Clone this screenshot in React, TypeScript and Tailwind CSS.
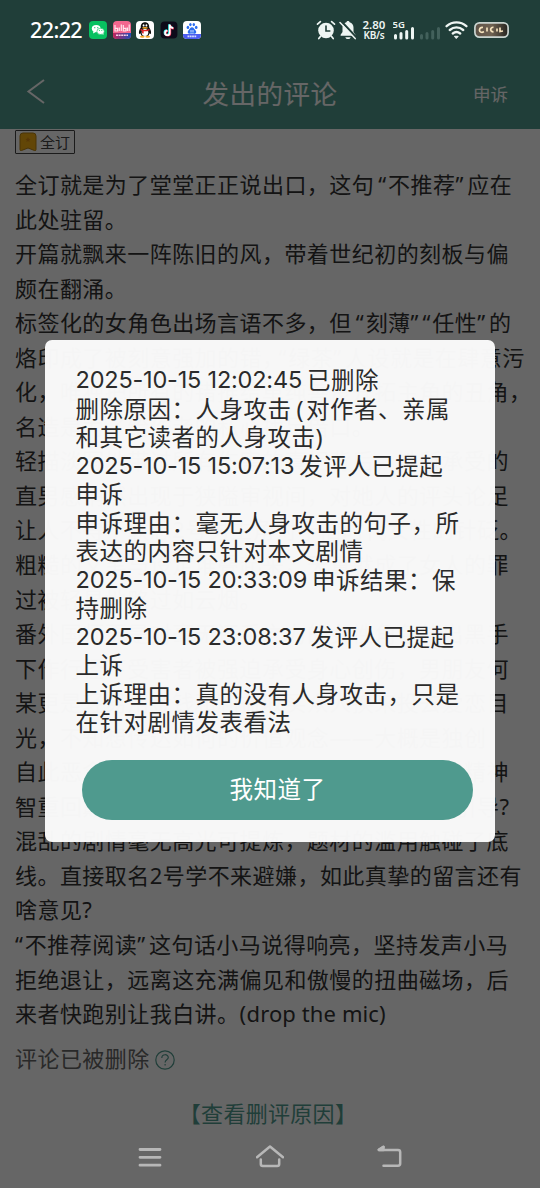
import React from "react";

const cjk = "font-['Noto_Sans','Noto_Sans_CJK_SC',sans-serif]";

const commentLines: string[] = [
  "全订就是为了堂堂正正说出口，这句“不推荐”应在",
  "此处驻留。",
  "开篇就飘来一阵陈旧的风，带着世纪初的刻板与偏",
  "颇在翻涌。",
  "标签化的女角色出场言语不多，但“刻薄”“任性”的",
  "烙印成了被刻意强加的错，“绿茶”人设就是在肆意污",
  "化，唯独把所有的错推给单纯善良开拓主角的丑角，",
  "名造是为了给作者的私心找足借口。",
  "轻描淡写地带过所有伤害的真相背后，她所承受的",
  "直男感悄然出现于狭隘审视间，对她人的评头论足",
  "让人不得不联想2号男主角对于旧时代女性的针砭。",
  "粗糙的文笔与设定堆叠起来，天真就成了女人的罪",
  "过被轻易地略过如云烟。",
  "番外国师更是对毫无还手之力的女性角色伸出黑手",
  "下作行径下受害者被强迫承受身心创伤，男朋友何",
  "某更是轻易用金钱和利益收买众人换来投去爱恋目",
  "光，不知想传达如何的价值观念——大概是独创",
  "自此恶念横生的角色竟能够得到所谓救赎宽恕精神",
  "智重回巅峰难道就是给读者们的所谓2号精神引导?",
  "混乱的剧情毫无高光可提炼，题材的滥用触碰了底",
  "线。直接取名2号学不来避嫌，如此真挚的留言还有",
  "啥意见?",
  "“不推荐阅读”这句话小马说得响亮，坚持发声小马",
  "拒绝退让，远离这充满偏见和傲慢的扭曲磁场，后",
  "来者快跑别让我白讲。(drop the mic)",
];

interface LogLine {
  time?: string;
  text: string;
}

const logLines: LogLine[] = [
  { time: "2025-10-15 12:02:45", text: "已删除" },
  { text: "删除原因：人身攻击(对作者、亲属" },
  { text: "和其它读者的人身攻击)" },
  { time: "2025-10-15 15:07:13", text: "发评人已提起" },
  { text: "申诉" },
  { text: "申诉理由：毫无人身攻击的句子，所" },
  { text: "表达的内容只针对本文剧情" },
  { time: "2025-10-15 20:33:09", text: "申诉结果：保" },
  { text: "持删除" },
  { time: "2025-10-15 23:08:37", text: "发评人已提起" },
  { text: "上诉" },
  { text: "上诉理由：真的没有人身攻击，只是" },
  { text: "在针对剧情发表看法" },
];

function Spaced({ text }: { text: string }) {
  return (
    <>
      {text.split(/([“”(]|[a-z ]{4,}\))/).map((part, i, parts) => {
        if (part === "“") {
          const before = parts[i - 1];
          if (before.endsWith("，")) return <span key={i} className="-ml-1.5 mr-[1.5px]">{part}</span>;
          return <span key={i} className={before ? "ml-1 mr-[1.5px]" : "mr-[1.5px]"}>{part}</span>;
        }
        if (part === "”") return <span key={i} className="mr-[3.5px]">{part}</span>;
        if (part === "(") return <span key={i} className={text.includes("drop") ? "" : "ml-[5px] mr-[2px]"}>{part}</span>;
        if (part.startsWith("drop")) return <span key={i} className="tracking-[0.1px]">{part}</span>;
        return part;
      })}
    </>
  );
}

function AppIcons() {
  return (
    <div className="ml-2 flex items-center gap-[5.5px]">
      {/* WeChat */}
      <svg width="18" height="18" viewBox="0 0 18 18">
        <rect width="18" height="18" rx="4" fill="#07c160" />
        <ellipse cx="7.2" cy="7.6" rx="4.4" ry="3.7" fill="#fff" />
        <path d="M4.5 10.3 4 12.4l2.4-1.2z" fill="#fff" />
        <ellipse cx="11.6" cy="10.4" rx="3.7" ry="3.1" fill="#fff" stroke="#07c160" strokeWidth=".6" />
        <path d="m13.2 12.8 1.3 1.3-.2-2z" fill="#fff" />
        <g fill="#07c160">
          <circle cx="5.8" cy="6.7" r=".6" />
          <circle cx="8.8" cy="6.7" r=".6" />
          <circle cx="10.4" cy="9.6" r=".5" />
          <circle cx="12.8" cy="9.6" r=".5" />
        </g>
      </svg>
      {/* bilibili */}
      <svg width="18" height="18" viewBox="0 0 18 18">
        <defs>
          <clipPath id="bili"><rect width="18" height="18" rx="4" /></clipPath>
          <linearGradient id="biliBar"><stop stopColor="#c2255c" /><stop offset="1" stopColor="#1d4fb8" /></linearGradient>
        </defs>
        <g clipPath="url(#bili)">
          <rect width="18" height="18" fill="#f2668f" />
          <rect y="12" width="18" height="6" fill="url(#biliBar)" />
          <path d="M2 4v6h2.6V7.4H2M6.3 6.5V10M8.3 3.5V10M10.3 4v6h2.6V7.4h-2.6M14.4 6.5V10M16.2 3.5V10" fill="none" stroke="#ffe3ec" strokeWidth="1.2" />
          <path d="M3 14.3h12" stroke="#f5d4e6" strokeWidth="1.6" strokeDasharray="2 .6" />
        </g>
      </svg>
      {/* QQ */}
      <svg width="18" height="18" viewBox="0 0 18 18">
        <rect width="18" height="18" rx="4" fill="#fff" />
        <path d="M9 1.3c-3 0-4.4 2.2-4.2 5.2C3.4 8.4 2.7 10.5 3 12.5c.3.9.9.3 1.4-.3.3 1.2.8 2 1.5 2.7h6.2c.7-.7 1.2-1.5 1.5-2.7.5.6 1.1 1.2 1.4.3.3-2-.4-4.1-1.800-6C13.400 3.500 12 1.300 9 1.300z" fill="#111" />
        <ellipse cx="9" cy="11.6" rx="3.3" ry="3.5" fill="#fff" />
        <ellipse cx="7.6" cy="4.4" rx=".9" ry="1.2" fill="#fff" />
        <ellipse cx="10.4" cy="4.4" rx=".9" ry="1.2" fill="#fff" />
        <ellipse cx="9" cy="6.8" rx="2.9" ry=".9" fill="#f9a825" />
        <path d="M4.7 7.8c2.800 1.600 5.800 1.600 8.600 0l.3 1.400c-1.800 1-3.900 1.300-5.900 1.100v2.200l-1.700-.2V10c-.6-.2-1.100-.4-1.600-.8z" fill="#e0272c" />
        <ellipse cx="6.3" cy="15.8" rx="2.4" ry="1" fill="#f9a825" />
        <ellipse cx="11.7" cy="15.8" rx="2.4" ry="1" fill="#f9a825" />
      </svg>
      {/* Douyin */}
      <svg width="18" height="18" viewBox="0 0 18 18">
        <rect x=".6" y=".6" width="16.8" height="16.8" rx="4" fill="#0d0b1a" />
        <g fill="none" strokeWidth="2">
          <path d="M9.2 3.2v8.3a2.3 2.3 0 1 1-2.3-2.3M9.2 3.5c.3 1.8 1.6 3 3.6 3.2" stroke="#25f4ee" />
          <path d="M10.2 4v8.3A2.3 2.3 0 1 1 7.9 10M10.2 4.3c.3 1.8 1.6 3 3.6 3.2" stroke="#fe2c55" />
          <path d="M9.7 3.6v8.3a2.3 2.3 0 1 1-2.3-2.3M9.7 3.9c.3 1.8 1.6 3 3.6 3.2" stroke="#fff" strokeWidth="1.7" />
        </g>
      </svg>
      {/* Baidu */}
      <svg width="18" height="18" viewBox="0 0 18 18">
        <defs><clipPath id="baidu"><rect width="18" height="18" rx="4" /></clipPath></defs>
        <g clipPath="url(#baidu)">
          <rect width="18" height="18" fill="#fff" />
          <g fill="#2a6cf0">
            <ellipse cx="4.9" cy="6.4" rx="1.3" ry="1.7" />
            <ellipse cx="7.4" cy="3.6" rx="1.2" ry="1.7" />
            <ellipse cx="10.8" cy="3.6" rx="1.2" ry="1.7" />
            <ellipse cx="13.2" cy="6.4" rx="1.3" ry="1.7" />
            <path d="M9 6.3c1.7 0 2.1 1.7 3.2 2.7 1.4 1.2 1.5 3.5-.5 3.8-1 .1-1.7-.2-2.7-.2s-1.7.3-2.7.2c-2-.3-1.9-2.6-.5-3.8C6.900 8 7.300 6.300 9 6.300z" />
          </g>
          <path d="M8 9v2.500M10 9v2.500" stroke="#fff" strokeWidth=".8" />
          <path d="M0 13h18v5H0z" fill="#4b5cf0" />
          <path d="M4.500 15.300h9" stroke="#d7dcff" strokeWidth="1.700" strokeDasharray="1.800 .5" />
        </g>
      </svg>
    </div>
  );
}

function SystemIcons() {
  return (
    <div className="flex items-center text-[#eef5f3]">
      {/* Alarm */}
      <svg width="20" height="20" viewBox="0 0 20 20" fill="none" stroke="currentColor" strokeLinecap="round">
        <circle cx="10" cy="10.5" r="7.8" fill="currentColor" stroke="none" />
        <path d="M1.5 4.2 4.4 1.6M18.5 4.2 15.6 1.6M4.4 16.5l-1.6 2M15.6 16.5l1.6 2" strokeWidth="1.7" />
        <path d="M10 6v5h3.8" stroke="#213e39" strokeWidth="1.6" />
      </svg>
      {/* Muted bell */}
      <svg className="ml-[3px]" width="18" height="20" viewBox="0 0 18 20">
        <path d="M9 1c1 0 1.500.6 1.600 1.300 2.500.7 3.900 2.700 3.900 5.200V12l1.900 2.700v1H1.600v-1L3.500 12V7.500c0-2.500 1.400-4.500 3.900-5.200C7.500 1.600 8 1 9 1zM6.300 17.200h5.400c-.4 1.200-1.300 1.900-2.700 1.900s-2.300-.7-2.700-1.900z" fill="currentColor" />
        <path d="M2 1.100 17.600 17.700" stroke="#213e39" strokeWidth="2.200" />
        <path d="M1 2.600 16.200 18.600" stroke="currentColor" strokeWidth="1.500" strokeLinecap="round" />
      </svg>
      <div className="ml-[5px] flex w-6 flex-col items-center font-['Noto_Sans',sans-serif] font-semibold leading-[10px]">
        <span className="text-[11.5px]">2.80</span>
        <span className="text-[10px] tracking-[-0.2px]">KB/s</span>
      </div>
      <svg className="ml-[7px]" width="22" height="20" viewBox="0 0 22 20">
        <text x="-0.5" y="8" fontSize="9.5" fontWeight="600" fontFamily="Noto Sans, sans-serif" fill="currentColor">5G</text>
        <path d="M2.5 18v-2.5M8 18v-4.5M13.7 18v-6.5M19.5 18V8.5" stroke="currentColor" strokeWidth="3" strokeLinecap="round" />
      </svg>
      <svg className="ml-[4px] text-[#42605b]" width="22" height="20" viewBox="0 0 22 20">
        <path d="M2.5 18v-2.5M8 18v-4.5M13.7 18v-6.5M19.5 18V8.5" stroke="currentColor" strokeWidth="3" strokeLinecap="round" />
      </svg>
      {/* Wi-Fi */}
      <svg className="ml-[4px]" width="23" height="20" viewBox="0 0 23 20" fill="none" stroke="currentColor" strokeWidth="2.3" strokeLinecap="round">
        <path d="M1.6 6.2c5.8-5 14-5 19.8 0M4.8 10c4-3.4 9.4-3.4 13.4 0M7.8 13.500c2.300-1.900 5.100-1.900 7.400 0" />
        <path d="M9.8 16.3h3.4l-1.7 2z" fill="currentColor" strokeWidth="1" />
      </svg>
      {/* Battery */}
      <svg className="ml-[6px]" width="35" height="16" viewBox="0 0 35 16">
        <defs>
          <linearGradient id="battery"><stop stopColor="#5d5147" /><stop offset=".5" stopColor="#6f6252" /><stop offset="1" stopColor="#25241f" /></linearGradient>
        </defs>
        <rect x=".9" y=".9" width="33.2" height="14.2" rx="4.5" fill="url(#battery)" stroke="#c9d3cf" strokeWidth="1.7" />
        <path d="M9 5.5c-4-.5-5 4.700-1 4.800l2-.6M13 5.500v4M19.500 5.300c-3.500-.5-4 4.600 0 4.500M23 6.500v3M26 5.500v4l3-.5" fill="none" stroke="#f5e3bd" strokeWidth="1.700" />
      </svg>
    </div>
  );
}

function StatusBar() {
  return (
    <div className="relative z-20 flex h-[60px] items-center justify-between pl-[30px] pr-[31px]">
      <div className="flex items-center">
        <span className="w-[51px] whitespace-nowrap font-['Noto_Sans',sans-serif] text-[21.5px] font-medium leading-6 tracking-[-0.6px] text-white">22:22</span>
        <AppIcons />
      </div>
      <SystemIcons />
    </div>
  );
}

function NavBar() {
  return (
    <div className="relative z-20 mb-[3px] mt-auto flex h-16 items-center justify-center gap-[92px] text-[#b7b7b7]">
      <svg width="28" height="28" viewBox="0 0 28 28" stroke="currentColor" strokeWidth="2.8" strokeLinecap="round">
        <path d="M4 6.5h20M4 14.3h20M4 22.2h20" />
      </svg>
      <svg width="28" height="28" viewBox="0 0 28 28" fill="none" stroke="currentColor" strokeWidth="2.5" strokeLinecap="round" strokeLinejoin="round">
        <path d="M1 14.200 14 3.500l13 10.700M4.800 16.500v4.600q0 2 2 2h14.400q2 0 2-2v-4.600" />
      </svg>
      <svg width="28" height="28" viewBox="0 0 28 28" fill="none" stroke="currentColor" strokeWidth="2.5" strokeLinecap="round" strokeLinejoin="round">
        <path d="M7.5 3.900 2.800 6.900H22q2.200 0 2.200 2.200V20.500q0 2.200-2.200 2.200H7.500" />
        <path d="M7.500 3.900 2.800 6.900h4.700z" fill="currentColor" />
      </svg>
    </div>
  );
}

function AppealDialog() {
  return (
    <div className="absolute inset-0 z-10 flex items-start justify-center bg-black/60 pt-[340px]">
      <div className="h-[502px] w-[450px] rounded-[7px] bg-[#fafafa]/98 pt-[26px]">
        <div className={`ml-[30.5px] text-[23.5px] tracking-[0.5px] text-[#2b2b2b] ${cjk}`}>
          {logLines.map((line, i) => (
            <div key={i} className="flex h-[28.5px] items-center whitespace-nowrap leading-[28.5px]">
              {line.time && (
                <span className="mr-[5px] font-['Inter',sans-serif] text-[23.5px] tracking-[-0.2px]">{line.time}</span>
              )}
              <span><Spaced text={line.text} /></span>
            </div>
          ))}
        </div>
        <button className={`ml-[37px] mt-[23px] flex h-[60px] w-[391px] items-center justify-center rounded-full bg-[#4f9a8e] text-[23.5px] tracking-[0.5px] text-white ${cjk}`}>
          我知道了
        </button>
      </div>
    </div>
  );
}

export default function App() {
  return (
    <div className={`relative flex h-[1188px] w-[540px] flex-col overflow-hidden bg-white ${cjk}`}>
      <div className="bg-[#529c8f]">
        <StatusBar />
        <header className="grid h-[69px] grid-cols-[100px_1fr_100px] items-center text-white">
          <svg className="mb-[6px] ml-[26px]" width="20" height="26" viewBox="0 0 20 26" fill="none" stroke="currentColor" strokeWidth="2">
            <path d="M18 1 2.500 12.500 18 24" />
          </svg>
          <h1 className="text-center text-[26.5px] tracking-[0.5px]">发出的评论</h1>
          <span className="pl-[33px] text-[17.5px]">申诉</span>
        </header>
      </div>

      <main className="px-[15px]">
        <div className="mt-px flex h-6 w-[60px] items-center rounded-[1px] border border-[#444] pl-[3px] text-[15px] text-[#444]">
          <svg width="18" height="20" viewBox="0 0 18 20">
            <path d="M4 1h10q3 0 3 3v13.5q0 1.5-1.5 1L9 16l-6.500 2.500Q1 19 1 17.500V4q0-3 3-3z" fill="#f5b013" stroke="#b98312" />
            <path d="m9 5 .8 1.700 1.800.2-1.300 1.300.3 1.800L9 9.100 7.400 10l.3-1.800-1.300-1.300 1.800-.2z" fill="#d98a13" />
          </svg>
          <span className="ml-[3px] whitespace-nowrap leading-5">全订</span>
        </div>

        <div className="mt-[13px] text-[22px] tracking-[0.45px] text-[#333]">
          {commentLines.map((line, i) => (
            <p key={i} className="h-[34.55px] whitespace-nowrap leading-[34.55px]">
              <Spaced text={line} />
            </p>
          ))}
        </div>

        <div className="mt-3 flex h-8 items-center text-[22px] tracking-[0.45px] text-[#666]">
          <span>评论已被删除</span>
          <svg className="ml-[5px] mt-0.5 text-[#529c8f]" width="20" height="20" viewBox="0 0 20 20" fill="none" stroke="currentColor" strokeWidth="1.2">
            <circle cx="10" cy="10" r="9.2" />
            <path d="M6.8 8c0-4.400 6.600-4.200 6.500-.4 0 2.200-3.200 2.300-3.200 4.900M10.100 14v1.500" />
          </svg>
        </div>
        <div className="mt-[22px] pr-1 text-center text-[22px] leading-8 tracking-[0.3px] text-[#529c8f]">【查看删评原因】</div>
      </main>

      <NavBar />
      <AppealDialog />
    </div>
  );
}
